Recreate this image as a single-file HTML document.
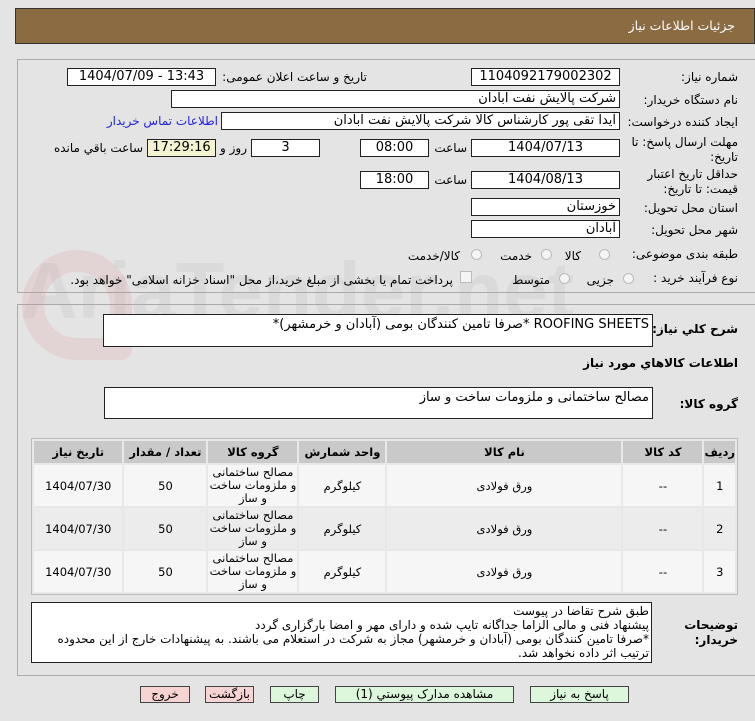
<!DOCTYPE html>
<html><head><meta charset="utf-8"><style>
*{box-sizing:border-box;margin:0;padding:0}
body{width:755px;height:721px;background:#e4e4e4;font-family:"DejaVu Sans",sans-serif;font-size:12px;color:#000;position:relative;overflow:hidden}
.a{position:absolute;white-space:nowrap}
.b{position:absolute;background:#fff;border:1px solid #222;text-align:center;font-size:13px;line-height:16px}
.l{position:absolute;white-space:nowrap;text-align:right;direction:rtl;font-size:12px}
.r{position:absolute;direction:rtl;text-align:right;padding-right:3px}
.rad{position:absolute;width:11px;height:11px;border-radius:50%;border:1px solid #bbb;background:#f4f4f4}
table{border-collapse:separate;border-spacing:2px}
td,th{text-align:center;font-size:11.5px}
th{background:#c9c9c9;height:22px;font-weight:bold}
.btn{position:absolute;top:686px;height:17px;border:1px solid #444;font-size:12px;text-align:center;line-height:15px;direction:rtl}
</style></head><body>
<div class="a" style="left:15px;top:8px;width:740px;height:36px;background:#8b6b42;border:1px solid #333"></div>
<div class="a" style="right:20px;top:18px;color:#fff;font-size:12.5px;direction:rtl">جزئیات اطلاعات نیاز</div>

<div class="a" style="left:17px;top:59px;width:738px;height:234px;border:1px solid #aaa;border-right:none"></div>
<div class="a" style="left:17px;top:304px;width:738px;height:372px;border:1px solid #aaa;border-right:none"></div>

<!-- watermark -->
<div class="a" style="left:20px;top:245px;font-size:80px;font-weight:bold;color:rgba(170,170,170,0.18);font-family:'Liberation Sans',sans-serif">AriaTender.net</div>
<div class="a" style="left:22px;top:250px;width:110px;height:110px;border:22px solid rgba(220,120,120,0.14);border-radius:50% 50% 10% 50%"></div>

<div class="l" style="right:17px;top:70px">شماره نیاز:</div>
<div class="b" style="left:471px;top:68px;width:149px;height:18px">1104092179002302</div>
<div class="l" style="right:388px;top:70px">تاریخ و ساعت اعلان عمومی:</div>
<div class="b" style="left:67px;top:68px;width:149px;height:18px">1404/07/09 - 13:43</div>

<div class="l" style="right:17px;top:93px">نام دستگاه خریدار:</div>
<div class="b r" style="left:171px;top:90px;width:449px;height:18px">شرکت پالایش نفت ابادان</div>

<div class="l" style="right:17px;top:115px">ایجاد کننده درخواست:</div>
<div class="b r" style="left:221px;top:112px;width:399px;height:18px">آیدا تقی پور کارشناس کالا شرکت پالایش نفت ابادان</div>
<div class="l" style="right:537px;top:114px;color:#2222dd">اطلاعات تماس خریدار</div>

<div class="l" style="right:17px;top:135px;line-height:15px">مهلت ارسال پاسخ: تا<br>تاریخ:</div>
<div class="b" style="left:471px;top:139px;width:149px;height:18px">1404/07/13</div>
<div class="l" style="right:288px;top:141px">ساعت</div>
<div class="b" style="left:360px;top:139px;width:69px;height:18px">08:00</div>
<div class="b" style="left:251px;top:139px;width:69px;height:18px">3</div>
<div class="l" style="right:508px;top:141px">روز و</div>
<div class="b" style="left:147px;top:139px;width:69px;height:18px;background:#f3f3d2">17:29:16</div>
<div class="l" style="right:612px;top:141px">ساعت باقي مانده</div>

<div class="l" style="right:17px;top:167px;line-height:15px">حداقل تاریخ اعتبار<br>قیمت: تا تاریخ:</div>
<div class="b" style="left:471px;top:171px;width:149px;height:18px">1404/08/13</div>
<div class="l" style="right:288px;top:173px">ساعت</div>
<div class="b" style="left:360px;top:171px;width:69px;height:18px">18:00</div>

<div class="l" style="right:17px;top:201px">استان محل تحویل:</div>
<div class="b r" style="left:471px;top:198px;width:149px;height:18px">خوزستان</div>
<div class="l" style="right:17px;top:223px">شهر محل تحویل:</div>
<div class="b r" style="left:471px;top:220px;width:149px;height:18px">آبادان</div>

<div class="l" style="right:17px;top:247px">طبقه بندی موضوعی:</div>
<div class="rad" style="left:599px;top:249px"></div><div class="l" style="right:174px;top:249px">کالا</div>
<div class="rad" style="left:541px;top:249px"></div><div class="l" style="right:223px;top:249px">خدمت</div>
<div class="rad" style="left:471px;top:249px"></div><div class="l" style="right:295px;top:249px">کالا/خدمت</div>

<div class="l" style="right:17px;top:271px">نوع فرآیند خرید :</div>
<div class="rad" style="left:623px;top:273px"></div><div class="l" style="right:141px;top:273px">جزیی</div>
<div class="rad" style="left:559px;top:273px"></div><div class="l" style="right:205px;top:273px">متوسط</div>
<div class="a" style="left:460px;top:271px;width:12px;height:12px;border:1px solid #bbb;background:#f4f4f4"></div>
<div class="l" style="right:302px;top:273px">پرداخت تمام یا بخشی از مبلغ خرید،از محل "اسناد خزانه اسلامی" خواهد بود.</div>

<div class="l" style="right:17px;top:322px;font-weight:bold">شرح کلي نیاز:</div>
<div class="b r" style="left:103px;top:314px;width:550px;height:33px;text-align:right;padding-top:2px">ROOFING SHEETS *صرفا تامین کنندگان بومی (آبادان و خرمشهر)*</div>
<div class="l" style="right:17px;top:356px;font-weight:bold">اطلاعات کالاهاي مورد نیاز</div>
<div class="l" style="right:17px;top:397px;font-weight:bold">گروه کالا:</div>
<div class="b r" style="left:104px;top:387px;width:549px;height:32px;text-align:right;padding-top:2px">مصالح ساختمانی و ملزومات ساخت و ساز</div>

<div class="a" style="left:31px;top:438px;width:707px;height:157px;border:1px solid #bbb;background:#e8e8e8">
<table style="width:705px;direction:rtl">
<tr><th style="width:27px">ردیف</th><th style="width:79px">کد کالا</th><th style="width:234px">نام کالا</th><th style="width:86px">واحد شمارش</th><th style="width:89px">گروه کالا</th><th style="width:82px">تعداد / مقدار</th><th>تاریخ نیاز</th></tr>
<tr style="height:41px"><td style="background:#f6f6f6">1</td><td style="background:#f6f6f6">--</td><td style="background:#f6f6f6">ورق فولادی</td><td style="background:#f6f6f6">کیلوگرم</td><td style="background:#f6f6f6;line-height:13px">مصالح ساختمانی<br>و ملزومات ساخت<br>و ساز</td><td style="background:#f6f6f6">50</td><td style="background:#f6f6f6">1404/07/30</td></tr>
<tr style="height:41px"><td style="background:#ececec">2</td><td style="background:#ececec">--</td><td style="background:#ececec">ورق فولادی</td><td style="background:#ececec">کیلوگرم</td><td style="background:#ececec;line-height:13px">مصالح ساختمانی<br>و ملزومات ساخت<br>و ساز</td><td style="background:#ececec">50</td><td style="background:#ececec">1404/07/30</td></tr>
<tr style="height:41px"><td style="background:#f6f6f6">3</td><td style="background:#f6f6f6">--</td><td style="background:#f6f6f6">ورق فولادی</td><td style="background:#f6f6f6">کیلوگرم</td><td style="background:#f6f6f6;line-height:13px">مصالح ساختمانی<br>و ملزومات ساخت<br>و ساز</td><td style="background:#f6f6f6">50</td><td style="background:#f6f6f6">1404/07/30</td></tr>
</table></div>

<div class="l" style="right:17px;top:618px;font-weight:bold;line-height:15px">توضیحات<br>خریدار:</div>
<div class="b" style="left:31px;top:602px;width:621px;height:61px;text-align:right;direction:rtl;font-size:12px;line-height:14px;padding:1px 2px 0 18px">طبق شرح تقاضا در پیوست<br>پیشنهاد فنی و مالی الزاما جداگانه تایپ شده و دارای مهر و امضا بارگزاری گردد<br>*صرفا تامین کنندگان بومی (آبادان و خرمشهر) مجاز به شرکت در استعلام می باشند. به پیشنهادات خارج از این محدوده ترتیب اثر داده نخواهد شد.</div>

<div class="btn" style="left:140px;width:50px;background:#f7d4d4">خروج</div>
<div class="btn" style="left:205px;width:49px;background:#f7d4d4">بازگشت</div>
<div class="btn" style="left:270px;width:49px;background:#dcf7dc">چاپ</div>
<div class="btn" style="left:335px;width:179px;background:#dcf7dc">مشاهده مدارک پیوستي (1)</div>
<div class="btn" style="left:530px;width:99px;background:#dcf7dc">پاسخ به نیاز</div>
</body></html>
